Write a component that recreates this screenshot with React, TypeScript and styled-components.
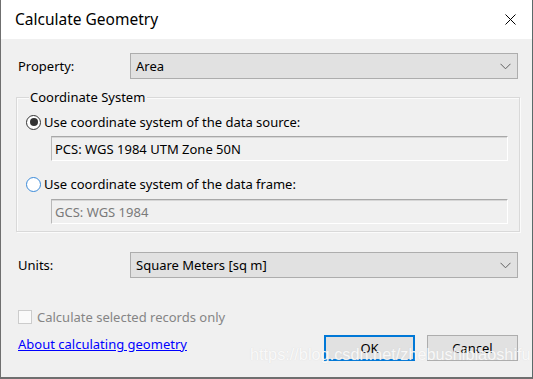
import React, { useState } from 'react'
import styled, { createGlobalStyle } from 'styled-components'

const GlobalStyle = createGlobalStyle`
    body {
        margin: 0;
        font-family: "Noto Sans", "Open Sans", sans-serif;
        font-size: 13px;
        color: #000;
        background: #3b3b3b;
    }
`

const Window = styled.div`
    position: relative;
    width: 533px;
    height: 379px;
    box-sizing: border-box;
    background-color: #f0f0f0;
    border-left: 1px solid #6f6f6f;
    border-right: 1px solid #5a6a6a;
    border-bottom: 2px solid #6f6f6f;
    display: flex;
    flex-direction: column;
    overflow: hidden;
`

const TitleBar = styled.div`
    height: 39px;
    background-color: #fff;
    display: flex;
    align-items: center;
    justify-content: space-between;
    padding: 0 16px 0 14px;
    flex-shrink: 0;
`

const Title = styled.span`
    font-size: 15.5px;
    margin-top: -1px;
`

const Body = styled.div`
    padding: 14px 14px 0 17px;
    display: flex;
    flex-direction: column;
`

const FieldRow = styled.div<{ $top: number }>`
    display: grid;
    grid-template-columns: 112px 1fr;
    align-items: center;
    margin-top: ${p => p.$top}px;
`

const Select = styled.div`
    height: 26px;
    box-sizing: border-box;
    background-color: #e1e1e1;
    border: 1px solid #adadad;
    display: flex;
    align-items: center;
    justify-content: space-between;
    padding: 0 6px 0 5px;
`

const GroupBox = styled.div`
    margin: 18px 0 0 -2px;
    width: 504px;
    box-sizing: border-box;
    border: 1px solid #d9d9d9;
    box-shadow: inset 1px 1px 0 #fbfbfb, 1px 1px 0 #fbfbfb;
    padding: 0 11px 7px 9px;
    display: flex;
    flex-direction: column;
`

const Legend = styled.span`
    align-self: flex-start;
    margin: -10px 0 0 3px;
    padding: 0 2px 0 1px;
    background-color: #f0f0f0;
    line-height: 18px;
`

const RadioRow = styled.div<{ $top: number }>`
    display: flex;
    align-items: center;
    gap: 3px;
    height: 16px;
    margin-top: ${p => p.$top}px;
`

const RadioDot = styled.span<{ $checked: boolean }>`
    width: 15px;
    height: 15px;
    box-sizing: border-box;
    border-radius: 50%;
    border: 1px solid ${p => (p.$checked ? '#333' : '#3a8ad9')};
    background-color: #fff;
    display: flex;
    align-items: center;
    justify-content: center;
    &::after {
        content: '';
        width: 8px;
        height: 8px;
        border-radius: 50%;
        background-color: ${p => (p.$checked ? '#333' : 'transparent')};
    }
`

const TextField = styled.div<{ $top: number; $disabled?: boolean }>`
    margin: ${p => p.$top}px 0 0 25px;
    height: 25px;
    box-sizing: border-box;
    border: 1px solid;
    border-color: #a8a8a8 #fff #fff #b8b8b8;
    box-shadow: inset 0 1px 0 #d6d6d6;
    display: flex;
    align-items: center;
    padding: 0 3px;
    color: ${p => (p.$disabled ? '#7a7a7a' : '#000')};
`

const Footer = styled.div`
    display: grid;
    grid-template-columns: 1fr auto;
    margin-top: 31px;
`

const CheckRow = styled.div`
    grid-column: 1 / 3;
    display: flex;
    align-items: center;
    gap: 5px;
    height: 16px;
    color: #858585;
`

const CheckBox = styled.span`
    width: 14px;
    height: 14px;
    box-sizing: border-box;
    border: 1px solid #cccccc;
    background-color: #fafafa;
`

const Link = styled.a`
    color: #0000ff;
    text-decoration: underline;
    align-self: start;
    margin-top: 10px;
    cursor: pointer;
`

const Buttons = styled.div`
    display: flex;
    gap: 12px;
    margin-top: 10px;
`

const Button = styled.button<{ $default?: boolean }>`
    width: 91px;
    height: 26px;
    box-sizing: border-box;
    font-family: inherit;
    font-size: 13px;
    color: #000;
    background-color: #e1e1e1;
    border: ${p => (p.$default ? '2px solid #0078d7' : '1px solid #adadad')};
    padding: 0;
`

const Watermark = styled.span`
    position: absolute;
    left: 249px;
    top: 345px;
    font-family: "Liberation Sans", Arial, sans-serif;
    font-size: 16.3px;
    color: rgba(255, 255, 255, 0.85);
    text-shadow: 0 0 1px rgba(200, 200, 200, 0.6);
    pointer-events: none;
    white-space: nowrap;
`

const Chevron = () => (
    <svg width="11" height="7" viewBox="0 0 11 7">
        <path d="M0.5 0.8 L5.5 5.8 L10.5 0.8" fill="none" stroke="#606060" strokeWidth="1" />
    </svg>
)

const CloseIcon = () => (
    <svg width="11" height="11" viewBox="0 0 11 11">
        <path d="M0.5 0.5 L10.5 10.5 M10.5 0.5 L0.5 10.5" stroke="#000" strokeWidth="1" />
    </svg>
)

export default function App() {
    const [source, setSource] = useState(0)

    return (
        <>
            <GlobalStyle />
            <Window>
                <TitleBar>
                    <Title>Calculate Geometry</Title>
                    <CloseIcon />
                </TitleBar>
                <Body>
                    <FieldRow $top={0}>
                        <span>Property:</span>
                        <Select>
                            <span>Area</span>
                            <Chevron />
                        </Select>
                    </FieldRow>

                    <GroupBox>
                        <Legend>Coordinate System</Legend>
                        <RadioRow $top={8} onClick={() => setSource(0)}>
                            <RadioDot $checked={source === 0} />
                            <span>Use coordinate system of the data source:</span>
                        </RadioRow>
                        <TextField $top={6}>PCS: WGS 1984 UTM Zone 50N</TextField>
                        <RadioRow $top={15} onClick={() => setSource(1)}>
                            <RadioDot $checked={source === 1} />
                            <span>Use coordinate system of the data frame:</span>
                        </RadioRow>
                        <TextField $top={7} $disabled>GCS: WGS 1984</TextField>
                    </GroupBox>

                    <FieldRow $top={20}>
                        <span>Units:</span>
                        <Select>
                            <span>Square Meters [sq m]</span>
                            <Chevron />
                        </Select>
                    </FieldRow>

                    <Footer>
                        <CheckRow>
                            <CheckBox />
                            <span>Calculate selected records only</span>
                        </CheckRow>
                        <Link>About calculating geometry</Link>
                        <Buttons>
                            <Button $default>OK</Button>
                            <Button>Cancel</Button>
                        </Buttons>
                    </Footer>
                </Body>
                <Watermark>https://blog.csdn.net/zhebushibiaoshifu</Watermark>
            </Window>
        </>
    )
}
